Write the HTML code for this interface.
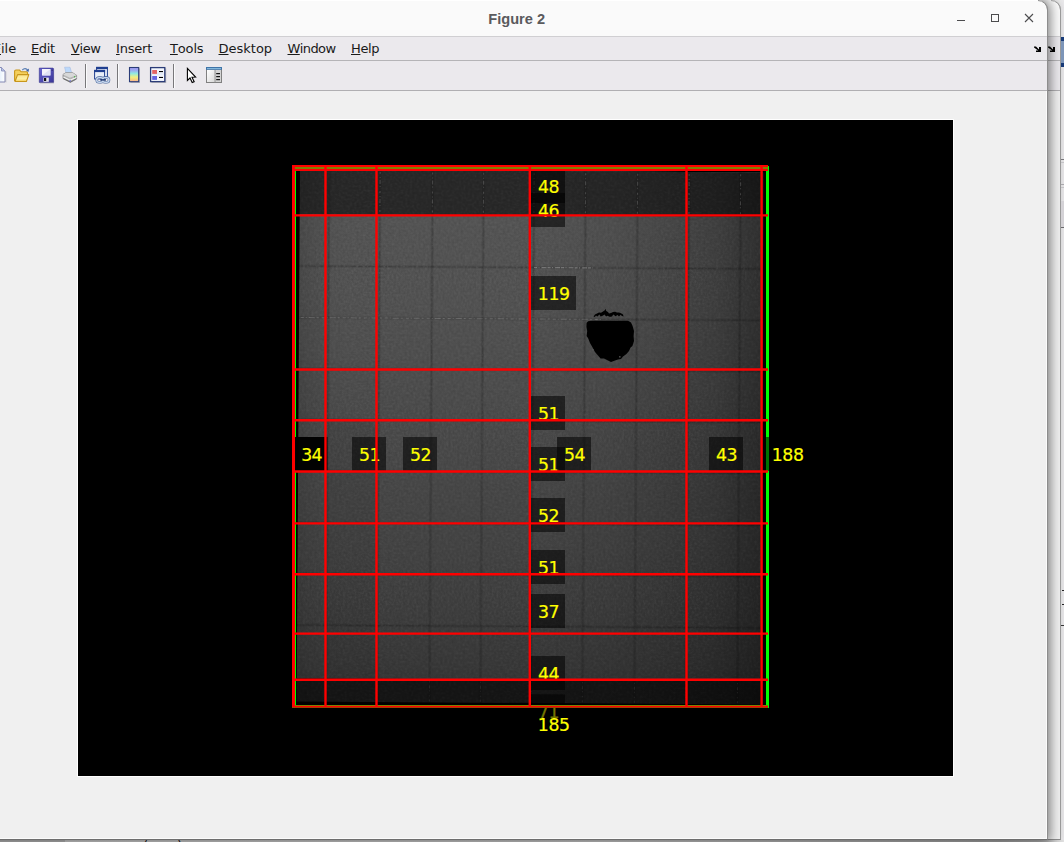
<!DOCTYPE html>
<html><head><meta charset="utf-8"><title>Figure 2</title>
<style>
html,body{margin:0;padding:0}
body{width:1064px;height:842px;overflow:hidden;position:relative;background:#e9e9e9;font-family:"DejaVu Sans","Liberation Sans",sans-serif}
.abs{position:absolute}
#bg3{left:1061px;top:0;width:3px;height:840px;background:#e9e8ea}
#under{left:0;top:840px;width:1064px;height:2px;background:linear-gradient(to right,#bdbdbd 0,#bdbdbd 65px,#d6d6d6 65px,#cfcfcf 600px,#a8a8a8 1000px,#b8b8b8 1047px,#e2e2e2 1064px)}
#under span{position:absolute;left:143px;top:-2px;font:13px "DejaVu Sans",sans-serif;color:#111;white-space:nowrap}
#win2{left:1030px;top:0;width:30px;height:839px;box-shadow:0 0 6px rgba(0,0,0,.10);border-right:1px solid #9c9c9c;border-bottom:1px solid #8c8c8c;border-top-right-radius:10px;background:#ebe9ed;overflow:hidden}
#win2 i{position:absolute;left:0;width:100%;display:block}

#win{left:-20px;top:0;width:1067px;height:839px;background:#f0f0f0;box-shadow:0 0 12px 2px rgba(0,0,0,.5);border-right:1px solid #8d8d8d;border-bottom:1px solid #6e6e6e;border-top-right-radius:10px;overflow:hidden}
#win .hl{left:0;top:91px;width:1066px;height:747px;border-right:1px solid #fbfbfb;border-bottom:1px solid #fbfbfb}
#title{left:0;top:0;width:100%;height:36px;background:#fafafa;border-bottom:1px solid #d0cfd2;box-shadow:inset 0 1px 0 #fff}
#title span{position:absolute;left:508.3px;top:11px;font:bold 14.6px "Liberation Sans",sans-serif;color:#5a5a5d;letter-spacing:0;white-space:nowrap}
#menu{left:0;top:37px;width:100%;height:23px;background:#ebe9ed;border-bottom:1px solid #b5b4b7}
#menu span{position:absolute;top:4px;font-size:13px;line-height:15px;color:#1a1a1a;white-space:nowrap;letter-spacing:-0.4px;font-kerning:none}
#menu u{text-decoration:underline;text-underline-offset:1px}
#tool{left:0;top:61px;width:100%;height:29px;background:#ebe9ed;border-bottom:1px solid #b0afb2}
#plot{left:0;top:0}
</style></head><body>
<div class="abs" id="bg3"></div>
<div class="abs" id="win2">
 <i style="top:0;height:36px;background:#fafafa"></i>
 <i style="top:36px;height:1px;background:#d0cfd2"></i>
 <i style="top:60px;height:1px;background:#b5b4b7"></i>
 <i style="top:90px;height:1px;background:#b0afb2"></i>
 <i style="top:91px;height:748px;background:#f0f0f0"></i>
</div>
<div class="abs" id="under"><span>(gray);</span></div>
<div class="abs" id="win">
 <div class="abs hl"></div>
 <div class="abs" id="title"><span>Figure 2</span></div>
 <div class="abs" id="menu">
  <span style="left:13.5px;letter-spacing:0"><u>F</u>ile</span>
  <span style="left:51px"><u>E</u>dit</span>
  <span style="left:91px"><u>V</u>iew</span>
  <span style="left:136px;letter-spacing:-0.2px"><u>I</u>nsert</span>
  <span style="left:190px;letter-spacing:-0.15px"><u>T</u>ools</span>
  <span style="left:238.5px;letter-spacing:0"><u>D</u>esktop</span>
  <span style="left:307.5px;letter-spacing:-0.6px"><u>W</u>indow</span>
  <span style="left:371px"><u>H</u>elp</span>
 </div>
 <div class="abs" id="tool"></div>
</div>
<svg class="abs" id="plot" width="1064" height="842" viewBox="0 0 1064 842">
<g id="chrome">
<rect x="957" y="20" width="8" height="1" fill="#4c4c4e"/>
<rect x="991.5" y="14.5" width="7" height="7" fill="none" stroke="#4c4c4e" stroke-width="1"/>
<path d="M1025,14 L1033,22 M1033,14 L1025,22" stroke="#4c4c4e" stroke-width="1.1" fill="none"/>
<path d="M1034,46.5 H1036 L1039,49.5 V47 H1041 V52 H1036 V50.5 H1038.2 L1034,47.5 Z" fill="#000"/>
<path d="M1048,46.5 H1050 L1053,49.5 V47 H1055 V52 H1050 V50.5 H1052.2 L1048,47.5 Z" fill="#000"/>
<path d="M1038,0.5 A9.5,9.5 0 0 1 1047.5,10" stroke="#8d8d8d" fill="none"/>
<path d="M1051,0.5 A9.5,9.5 0 0 1 1060.5,10" stroke="#9c9c9c" fill="none"/>
<rect x="1061" y="37" width="3" height="30" fill="#7d95b8"/>
<rect x="1061" y="37" width="3" height="4" fill="#173a78"/>
<rect x="1061" y="63" width="3" height="4" fill="#173a78"/>
<rect x="1061" y="159" width="3" height="1" fill="#77767a"/><rect x="1061" y="162" width="3" height="1" fill="#c4c3c6"/>
<rect x="1061" y="184" width="3" height="1" fill="#a9a8ac"/><rect x="1061" y="187" width="3" height="1" fill="#c4c3c6"/>
<rect x="1061" y="201" width="3" height="26" fill="#d4d2d6"/><rect x="1061" y="227" width="3" height="1" fill="#6a696c"/>
<rect x="1062" y="590" width="2" height="1" fill="#222"/><rect x="1062" y="604" width="2" height="1" fill="#222"/><rect x="1061" y="625" width="3" height="1" fill="#333"/>
</g>
<defs>
<linearGradient id="gcb" x1="0" y1="0" x2="0" y2="1"><stop offset="0" stop-color="#a39af2"/><stop offset="0.2" stop-color="#9aa8f0"/><stop offset="0.42" stop-color="#8fe8e2"/><stop offset="0.68" stop-color="#f0f080"/><stop offset="0.85" stop-color="#f8d080"/><stop offset="1" stop-color="#f8aa98"/></linearGradient>
<linearGradient id="gfold" x1="0" y1="0" x2="0" y2="1"><stop offset="0" stop-color="#fbe28a"/><stop offset="0.6" stop-color="#fdf0a8"/><stop offset="1" stop-color="#f6cf58"/></linearGradient>
<linearGradient id="gsave" x1="0" y1="0" x2="1" y2="1"><stop offset="0" stop-color="#6a66d0"/><stop offset="1" stop-color="#3a3698"/></linearGradient>
<linearGradient id="gdoc" x1="0" y1="0" x2="1" y2="0"><stop offset="0" stop-color="#cfe4fb"/><stop offset="1" stop-color="#ffffff"/></linearGradient>
<linearGradient id="gpan" x1="0" y1="0" x2="1" y2="1"><stop offset="0" stop-color="#ffffff"/><stop offset="1" stop-color="#d8d8d8"/></linearGradient>
</defs>
<g id="icons">
<!-- new doc -->
<path d="M-6,67.5 H1.5 L5,71 V82 H-6 Z" fill="url(#gdoc)" stroke="#8488b4" stroke-width="1"/>
<path d="M1.5,67.5 V71 H5" fill="#b8c4e8" stroke="#8488b4" stroke-width="0.8"/>
<rect x="5.5" y="71.5" width="0.8" height="11" fill="#9a9aa8" opacity="0.6"/>
<!-- open folder -->
<path d="M14.6,81 V71.2 Q14.6,70 16,70 H19.5 L21.2,71.8 H26.5 Q27.6,71.8 27.6,73 V74" fill="#f4cf5c" stroke="#c8961c" stroke-width="1.1"/>
<path d="M15,81.5 L17.6,74.6 H28.8 L26.4,81.5 Z" fill="url(#gfold)" stroke="#c8961c" stroke-width="1.1" stroke-linejoin="round"/>
<path d="M22.3,70 Q25.2,67 28,70.4" fill="none" stroke="#5c7fb4" stroke-width="1.1"/>
<path d="M28.9,68.4 L28.7,71.8 L25.9,70.9 Z" fill="#3c64a8"/>
<!-- save -->
<path d="M39.3,68.1 H53 L53.6,68.7 V82.4 H39.3 Z" fill="url(#gsave)" stroke="#34308a" stroke-width="0.6"/>
<rect x="42" y="69" width="8.4" height="6.4" fill="#f4f4fb"/>
<path d="M42,75.4 L50.4,69 V75.4 Z" fill="#dfe2f4"/>
<rect x="43.4" y="77.6" width="5.4" height="4.2" fill="#e8e8ee"/>
<rect x="44" y="78" width="2.2" height="3" fill="#111"/>
<rect x="51.6" y="69.4" width="1" height="1.6" fill="#2a2670"/>
<rect x="40" y="82.6" width="14" height="0.8" fill="#8a8a98" opacity="0.6"/>
<!-- printer -->
<path d="M64.6,67.2 H70 L71.8,73.2 H66 Z" fill="#bcd8fa" stroke="#9ab4dc" stroke-width="0.5"/>
<path d="M63,74.4 L66,72.6 H72.4 L76.6,75.2 V79 L70.4,82.4 L63,78.6 Z" fill="#b4b4b4" stroke="#7c7c7c" stroke-width="0.7"/>
<path d="M63,74.6 L69.8,77.8 L76.6,75.2 L72.4,72.8 H66 Z" fill="#d8d8d8"/>
<path d="M63.4,77 L70.2,80.2 L76.4,77.4" fill="none" stroke="#f4f4f4" stroke-width="1.2"/>
<path d="M63.4,78.6 L70.3,82 L76.4,78.8" fill="none" stroke="#686868" stroke-width="0.9"/>
<rect x="74" y="76.2" width="1.2" height="1.2" fill="#3cb43c"/>
<rect x="69.4" y="80.4" width="1.6" height="1" fill="#5a5ad0"/>
<!-- sep1 -->
<rect x="85" y="64" width="1" height="24" fill="#78777a"/><rect x="86" y="64" width="1" height="24" fill="#fbfbfc"/>
<!-- link windows -->
<rect x="96.6" y="67.4" width="10.8" height="9.6" fill="#eef2fa" stroke="#203f90" stroke-width="1"/>
<rect x="96.1" y="66.9" width="11.8" height="2.2" fill="#203f90"/>
<rect x="94.6" y="70.4" width="10" height="8.6" fill="#e8eef8" stroke="#203f90" stroke-width="1"/>
<rect x="94.1" y="69.9" width="11" height="2.2" fill="#203f90"/>
<g fill="none">
<rect x="96.7" y="77.6" width="6.4" height="4.6" rx="2.3" stroke="#4a679c" stroke-width="2.5"/>
<rect x="102.6" y="77.6" width="6.4" height="4.6" rx="2.3" stroke="#4a679c" stroke-width="2.5"/>
<rect x="96.7" y="77.6" width="6.4" height="4.6" rx="2.3" stroke="#c9d8ee" stroke-width="1.4"/>
<rect x="102.6" y="77.6" width="6.4" height="4.6" rx="2.3" stroke="#c9d8ee" stroke-width="1.4"/>
</g>
<rect x="100.2" y="79.2" width="5.8" height="1.4" fill="#16306c"/>
<!-- sep2 -->
<rect x="117" y="64" width="1" height="24" fill="#78777a"/><rect x="118" y="64" width="1" height="24" fill="#fbfbfc"/>
<!-- colorbar -->
<rect x="130.4" y="68.4" width="9.6" height="14.6" fill="#8c8c94" opacity="0.55"/>
<rect x="129.5" y="67.5" width="9.2" height="14.2" fill="url(#gcb)" stroke="#2b3c78" stroke-width="1.1"/>
<!-- legend -->
<rect x="151.4" y="68.4" width="14.8" height="14.6" fill="#8c8c94" opacity="0.55"/>
<rect x="150.6" y="67.6" width="14.2" height="14" fill="#f4f7fd" stroke="#2b3c78" stroke-width="1.3"/>
<rect x="152" y="72.6" width="11.6" height="2.6" fill="#e4ebf8"/>
<rect x="152.2" y="70" width="4.8" height="3.9" fill="#e26464"/>
<rect x="152.2" y="76" width="4.8" height="3.9" fill="#6464e2"/>
<rect x="159" y="71" width="4" height="1.1" fill="#000"/>
<rect x="159" y="76.9" width="4" height="1.1" fill="#000"/>
<!-- sep3 -->
<rect x="173" y="64" width="1" height="24" fill="#78777a"/><rect x="174" y="64" width="1" height="24" fill="#fbfbfc"/>
<!-- cursor -->
<path d="M187.4,68.4 V80.4 L190,78 L192.2,82.6 L194.2,81.7 L192,77.2 L195.6,77 Z" fill="#fff" stroke="#000" stroke-width="1.1" stroke-linejoin="miter"/>
<!-- panel -->
<rect x="206.5" y="67.5" width="15" height="15" fill="#d4d4d4" stroke="#808080" stroke-width="1"/>
<rect x="207" y="70" width="7.6" height="12" fill="url(#gpan)"/>
<rect x="214.6" y="70" width="0.9" height="12.4" fill="#909090"/>
<rect x="206" y="67" width="16" height="2.8" fill="#3f74a8"/>
<rect x="207" y="68" width="14" height="0.9" fill="#8cc0e4"/>
<rect x="216.2" y="73.1" width="3.8" height="1.1" fill="#000"/>
<rect x="216.2" y="76.1" width="3.8" height="1.1" fill="#000"/>
<rect x="216.2" y="79.1" width="3.8" height="1.1" fill="#000"/>
</g>

<defs>
<linearGradient id="gv" x1="0" y1="0" x2="0" y2="1"><stop offset="0.086" stop-color="#545454"/><stop offset="0.242" stop-color="#525252"/><stop offset="0.430" stop-color="#4c4c4c"/><stop offset="0.712" stop-color="#434343"/><stop offset="0.806" stop-color="#3f3f3f"/><stop offset="0.910" stop-color="#393939"/><stop offset="0.957" stop-color="#363636"/><stop offset="1.000" stop-color="#343434"/></linearGradient>
<linearGradient id="gh" x1="0" y1="0" x2="1" y2="0"><stop offset="0.000" stop-color="#000" stop-opacity="0.14"/><stop offset="0.028" stop-color="#000" stop-opacity="0.08"/><stop offset="0.071" stop-color="#000" stop-opacity="0.02"/><stop offset="0.113" stop-color="#000" stop-opacity="0"/><stop offset="0.498" stop-color="#000" stop-opacity="0"/><stop offset="0.562" stop-color="#000" stop-opacity="0.03"/><stop offset="0.669" stop-color="#000" stop-opacity="0.07"/><stop offset="0.776" stop-color="#000" stop-opacity="0.145"/><stop offset="0.893" stop-color="#000" stop-opacity="0.245"/><stop offset="0.968" stop-color="#000" stop-opacity="0.39"/><stop offset="1.000" stop-color="#000" stop-opacity="0.45"/></linearGradient>
<filter id="nz" x="0" y="0" width="100%" height="100%" color-interpolation-filters="sRGB"><feTurbulence type="fractalNoise" baseFrequency="0.45" numOctaves="2" seed="3" result="n"/><feColorMatrix in="n" type="matrix" values="1 0 0 0 0  1 0 0 0 0  1 0 0 0 0  0 0 0 0 1"/></filter>
<clipPath id="cimg"><rect x="298.3" y="168" width="463.6" height="535"/></clipPath>
</defs>
<rect x="77" y="119" width="877" height="658" fill="#fff"/>
<rect x="78" y="120" width="875" height="656" fill="#000"/>
<g transform="rotate(0.36 530 437)"><g clip-path="url(#cimg)">
<rect x="297" y="171" width="468" height="532" fill="url(#gv)"/>
<rect x="297" y="171" width="468" height="44.4" fill="#282828"/>
<rect x="297" y="679.5" width="468" height="25" fill="#151515"/>
<rect x="297" y="171" width="468" height="532" fill="url(#gh)"/>
<line x1="327.5" y1="171" x2="327.5" y2="703" stroke="#000" stroke-opacity="0.09" stroke-width="3"/>
<line x1="327.5" y1="215" x2="327.5" y2="421" stroke="#000" stroke-opacity="0.12" stroke-width="1" stroke-dasharray="7 1 3 2 9 1.5"/>
<line x1="327.5" y1="421" x2="327.5" y2="680" stroke="#000" stroke-opacity="0.06" stroke-width="1" stroke-dasharray="7 1 3 2 9 1.5"/>
<line x1="378.5" y1="171" x2="378.5" y2="703" stroke="#000" stroke-opacity="0.09" stroke-width="3"/>
<line x1="378.5" y1="215" x2="378.5" y2="421" stroke="#000" stroke-opacity="0.12" stroke-width="1" stroke-dasharray="7 1 3 2 9 1.5"/>
<line x1="378.5" y1="421" x2="378.5" y2="680" stroke="#000" stroke-opacity="0.06" stroke-width="1" stroke-dasharray="7 1 3 2 9 1.5"/>
<line x1="431" y1="171" x2="431" y2="703" stroke="#000" stroke-opacity="0.09" stroke-width="3"/>
<line x1="431" y1="215" x2="431" y2="421" stroke="#000" stroke-opacity="0.12" stroke-width="1" stroke-dasharray="7 1 3 2 9 1.5"/>
<line x1="431" y1="421" x2="431" y2="680" stroke="#000" stroke-opacity="0.06" stroke-width="1" stroke-dasharray="7 1 3 2 9 1.5"/>
<line x1="482" y1="171" x2="482" y2="703" stroke="#000" stroke-opacity="0.09" stroke-width="3"/>
<line x1="482" y1="215" x2="482" y2="421" stroke="#000" stroke-opacity="0.12" stroke-width="1" stroke-dasharray="7 1 3 2 9 1.5"/>
<line x1="482" y1="421" x2="482" y2="680" stroke="#000" stroke-opacity="0.06" stroke-width="1" stroke-dasharray="7 1 3 2 9 1.5"/>
<line x1="532.5" y1="171" x2="532.5" y2="703" stroke="#000" stroke-opacity="0.09" stroke-width="3"/>
<line x1="532.5" y1="215" x2="532.5" y2="421" stroke="#000" stroke-opacity="0.12" stroke-width="1" stroke-dasharray="7 1 3 2 9 1.5"/>
<line x1="532.5" y1="421" x2="532.5" y2="680" stroke="#000" stroke-opacity="0.06" stroke-width="1" stroke-dasharray="7 1 3 2 9 1.5"/>
<line x1="584" y1="171" x2="584" y2="703" stroke="#000" stroke-opacity="0.09" stroke-width="3"/>
<line x1="584" y1="215" x2="584" y2="421" stroke="#000" stroke-opacity="0.12" stroke-width="1" stroke-dasharray="7 1 3 2 9 1.5"/>
<line x1="584" y1="421" x2="584" y2="680" stroke="#000" stroke-opacity="0.06" stroke-width="1" stroke-dasharray="7 1 3 2 9 1.5"/>
<line x1="636" y1="171" x2="636" y2="703" stroke="#000" stroke-opacity="0.09" stroke-width="3"/>
<line x1="636" y1="215" x2="636" y2="421" stroke="#000" stroke-opacity="0.12" stroke-width="1" stroke-dasharray="7 1 3 2 9 1.5"/>
<line x1="636" y1="421" x2="636" y2="680" stroke="#000" stroke-opacity="0.06" stroke-width="1" stroke-dasharray="7 1 3 2 9 1.5"/>
<line x1="687.5" y1="171" x2="687.5" y2="703" stroke="#000" stroke-opacity="0.09" stroke-width="3"/>
<line x1="687.5" y1="215" x2="687.5" y2="421" stroke="#000" stroke-opacity="0.12" stroke-width="1" stroke-dasharray="7 1 3 2 9 1.5"/>
<line x1="687.5" y1="421" x2="687.5" y2="680" stroke="#000" stroke-opacity="0.06" stroke-width="1" stroke-dasharray="7 1 3 2 9 1.5"/>
<line x1="739" y1="171" x2="739" y2="703" stroke="#000" stroke-opacity="0.09" stroke-width="3"/>
<line x1="739" y1="215" x2="739" y2="421" stroke="#000" stroke-opacity="0.12" stroke-width="1" stroke-dasharray="7 1 3 2 9 1.5"/>
<line x1="739" y1="421" x2="739" y2="680" stroke="#000" stroke-opacity="0.06" stroke-width="1" stroke-dasharray="7 1 3 2 9 1.5"/>
<line x1="297" y1="267.5" x2="766" y2="267.5" stroke="#000" stroke-opacity="0.08" stroke-width="3"/>
<line x1="297" y1="267.5" x2="766" y2="267.5" stroke="#000" stroke-opacity="0.13" stroke-width="1" stroke-dasharray="5 2 2 1 8 2"/>
<line x1="297" y1="319" x2="766" y2="319" stroke="#000" stroke-opacity="0.08" stroke-width="3"/>
<line x1="300" y1="319" x2="600" y2="319" stroke="#b0b0b0" stroke-opacity="0.3" stroke-width="1" stroke-dasharray="3 2 1 2 6 2 2 3"/>
<line x1="600" y1="319" x2="766" y2="319" stroke="#000" stroke-opacity="0.12" stroke-width="1" stroke-dasharray="5 2 2 1 8 2"/>
<line x1="297" y1="370" x2="766" y2="370" stroke="#000" stroke-opacity="0.08" stroke-width="3"/>
<line x1="297" y1="370" x2="766" y2="370" stroke="#000" stroke-opacity="0.13" stroke-width="1" stroke-dasharray="5 2 2 1 8 2"/>
<line x1="297" y1="421" x2="766" y2="421" stroke="#000" stroke-opacity="0.08" stroke-width="3"/>
<line x1="297" y1="421" x2="766" y2="421" stroke="#000" stroke-opacity="0.13" stroke-width="1" stroke-dasharray="5 2 2 1 8 2"/>
<line x1="297" y1="472" x2="766" y2="472" stroke="#000" stroke-opacity="0.08" stroke-width="3"/>
<line x1="297" y1="472" x2="766" y2="472" stroke="#000" stroke-opacity="0.13" stroke-width="1" stroke-dasharray="5 2 2 1 8 2"/>
<line x1="297" y1="524" x2="766" y2="524" stroke="#000" stroke-opacity="0.08" stroke-width="3"/>
<line x1="297" y1="524" x2="766" y2="524" stroke="#000" stroke-opacity="0.13" stroke-width="1" stroke-dasharray="5 2 2 1 8 2"/>
<line x1="297" y1="575" x2="766" y2="575" stroke="#000" stroke-opacity="0.08" stroke-width="3"/>
<line x1="297" y1="575" x2="766" y2="575" stroke="#000" stroke-opacity="0.13" stroke-width="1" stroke-dasharray="5 2 2 1 8 2"/>
<line x1="297" y1="626.5" x2="766" y2="626.5" stroke="#000" stroke-opacity="0.08" stroke-width="3"/>
<line x1="297" y1="626.5" x2="766" y2="626.5" stroke="#000" stroke-opacity="0.13" stroke-width="1" stroke-dasharray="5 2 2 1 8 2"/>
<line x1="378.5" y1="173" x2="378.5" y2="214" stroke="#999" stroke-opacity="0.3" stroke-width="1.1" stroke-dasharray="2 3 1 2 4 2 1 4"/>
<line x1="378.5" y1="682" x2="378.5" y2="702" stroke="#999" stroke-opacity="0.15" stroke-width="1.1" stroke-dasharray="1 3 3 2 1 4"/>
<line x1="431" y1="173" x2="431" y2="214" stroke="#999" stroke-opacity="0.3" stroke-width="1.1" stroke-dasharray="2 3 1 2 4 2 1 4"/>
<line x1="431" y1="682" x2="431" y2="702" stroke="#999" stroke-opacity="0.15" stroke-width="1.1" stroke-dasharray="1 3 3 2 1 4"/>
<line x1="482" y1="173" x2="482" y2="214" stroke="#999" stroke-opacity="0.3" stroke-width="1.1" stroke-dasharray="2 3 1 2 4 2 1 4"/>
<line x1="482" y1="682" x2="482" y2="702" stroke="#999" stroke-opacity="0.15" stroke-width="1.1" stroke-dasharray="1 3 3 2 1 4"/>
<line x1="532.5" y1="173" x2="532.5" y2="214" stroke="#999" stroke-opacity="0.3" stroke-width="1.1" stroke-dasharray="2 3 1 2 4 2 1 4"/>
<line x1="532.5" y1="682" x2="532.5" y2="702" stroke="#999" stroke-opacity="0.15" stroke-width="1.1" stroke-dasharray="1 3 3 2 1 4"/>
<line x1="584" y1="173" x2="584" y2="214" stroke="#999" stroke-opacity="0.3" stroke-width="1.1" stroke-dasharray="2 3 1 2 4 2 1 4"/>
<line x1="584" y1="682" x2="584" y2="702" stroke="#999" stroke-opacity="0.15" stroke-width="1.1" stroke-dasharray="1 3 3 2 1 4"/>
<line x1="636" y1="173" x2="636" y2="214" stroke="#999" stroke-opacity="0.3" stroke-width="1.1" stroke-dasharray="2 3 1 2 4 2 1 4"/>
<line x1="636" y1="682" x2="636" y2="702" stroke="#999" stroke-opacity="0.15" stroke-width="1.1" stroke-dasharray="1 3 3 2 1 4"/>
<line x1="687.5" y1="173" x2="687.5" y2="214" stroke="#999" stroke-opacity="0.3" stroke-width="1.1" stroke-dasharray="2 3 1 2 4 2 1 4"/>
<line x1="687.5" y1="682" x2="687.5" y2="702" stroke="#999" stroke-opacity="0.15" stroke-width="1.1" stroke-dasharray="1 3 3 2 1 4"/>
<line x1="739" y1="173" x2="739" y2="214" stroke="#999" stroke-opacity="0.3" stroke-width="1.1" stroke-dasharray="2 3 1 2 4 2 1 4"/>
<line x1="739" y1="682" x2="739" y2="702" stroke="#999" stroke-opacity="0.15" stroke-width="1.1" stroke-dasharray="1 3 3 2 1 4"/>
<rect x="328" y="421" width="50" height="259" fill="#000" fill-opacity="0.06"/>
<line x1="533" y1="267.5" x2="592" y2="267.5" stroke="#aaa" stroke-opacity="0.5" stroke-width="1.2" stroke-dasharray="3 1.5 1 2 5 1"/>
<rect x="297" y="171" width="468" height="532" filter="url(#nz)" opacity="0.2" style="mix-blend-mode:soft-light"/>
</g></g>
<path d="M586.6,323 L588,321.2 L592,320.8 L628,320.8 L631,322.5 L632.6,326 L634,331 L633.6,336 L634,341 L632.4,346 L630.6,347.5 L629,351 L626.4,354 L623,356.4 L621,359 L618,359.4 L615,360.6 L611,362 L608,360.4 L604,358.6 L600.6,358.4 L598,355.4 L595,352 L592.6,347.6 L590,343 L588,338 L586.6,336 L587.2,331 L586.4,327 Z" fill="#000"/>
<path d="M593.6,316.6 L595,314.4 L597,313.4 L599,312.4 L601,312.8 L603,311.6 L604.6,310.4 L605.4,308.8 L606.2,311 L608,312 L609,313.6 L611,313 L613,312 L615,311.8 L617,312.6 L619,312.4 L621,313.2 L623,314.6 L623.6,316.4 L622,316 L620.6,314.8 L619,316.6 L617.6,315 L615.4,316.2 L613.6,314.6 L611.4,316.8 L609.6,316.8 L607.6,315.8 L606,316.6 L604.6,314.4 L602.6,315.8 L600.6,316.4 L599.4,314.6 L597.4,316.4 L596,315.4 L594.6,317 Z" fill="#000"/>
<rect x="592" y="349" width="1.6" height="1.6" fill="#555"/><rect x="619" y="356" width="1.6" height="1.6" fill="#444"/>
<rect x="295" y="169" width="1" height="537" fill="#00ff00"/>
<rect x="766" y="166" width="3" height="542" fill="#00ff00"/>
<g font-family="DejaVu Sans, Liberation Sans, sans-serif" font-size="17.33">
<rect x="531" y="169" width="34" height="34" fill="#000" fill-opacity="0.55"/>
<text x="538.0" y="192.5" fill="#ffff00" stroke="#ffff00" stroke-width="0.2" letter-spacing="-0.6">48</text>
<rect x="531" y="193" width="34" height="34" fill="#000" fill-opacity="0.55"/>
<text x="538.0" y="216.5" fill="#ffff00" stroke="#ffff00" stroke-width="0.2" letter-spacing="-0.6">46</text>
<rect x="531" y="276" width="45" height="34" fill="#000" fill-opacity="0.55"/>
<text x="537.75" y="299.5" fill="#ffff00" stroke="#ffff00" stroke-width="0.2" letter-spacing="-0.38">119</text>
<rect x="531" y="396" width="34" height="34" fill="#000" fill-opacity="0.55"/>
<text x="538.0" y="419.5" fill="#ffff00" stroke="#ffff00" stroke-width="0.2" letter-spacing="-0.6">51</text>
<rect x="531" y="447" width="34" height="34" fill="#000" fill-opacity="0.55"/>
<text x="538.0" y="470.5" fill="#ffff00" stroke="#ffff00" stroke-width="0.2" letter-spacing="-0.6">51</text>
<rect x="531" y="498" width="34" height="34" fill="#000" fill-opacity="0.55"/>
<text x="538.0" y="521.5" fill="#ffff00" stroke="#ffff00" stroke-width="0.2" letter-spacing="-0.6">52</text>
<rect x="531" y="550" width="34" height="34" fill="#000" fill-opacity="0.55"/>
<text x="538.0" y="573.5" fill="#ffff00" stroke="#ffff00" stroke-width="0.2" letter-spacing="-0.6">51</text>
<rect x="531" y="594" width="34" height="34" fill="#000" fill-opacity="0.55"/>
<text x="538.0" y="617.5" fill="#ffff00" stroke="#ffff00" stroke-width="0.2" letter-spacing="-0.6">37</text>
<rect x="531" y="656" width="34" height="34" fill="#000" fill-opacity="0.55"/>
<text x="538.0" y="679.5" fill="#ffff00" stroke="#ffff00" stroke-width="0.2" letter-spacing="-0.6">44</text>
<rect x="531" y="694.3" width="34" height="34" fill="#000" fill-opacity="0.55"/>
<text x="538.0" y="717.8" fill="#ffff00" stroke="#ffff00" stroke-width="0.2" letter-spacing="-0.6">71</text>
<rect x="531" y="707.2" width="45" height="34" fill="#000" fill-opacity="0.55"/>
<text x="537.75" y="730.7" fill="#ffff00" stroke="#ffff00" stroke-width="0.2" letter-spacing="-0.38">185</text>
<rect x="294.2" y="437" width="33.3" height="34" fill="#000" fill-opacity="0.97"/>
<text x="301.2" y="460.5" fill="#ffff00" stroke="#ffff00" stroke-width="0.2" letter-spacing="-0.6">34</text>
<rect x="352" y="437" width="34" height="34" fill="#000" fill-opacity="0.55"/>
<text x="359.0" y="460.5" fill="#ffff00" stroke="#ffff00" stroke-width="0.2" letter-spacing="-0.6">51</text>
<rect x="403" y="437" width="34" height="34" fill="#000" fill-opacity="0.55"/>
<text x="410.0" y="460.5" fill="#ffff00" stroke="#ffff00" stroke-width="0.2" letter-spacing="-0.6">52</text>
<rect x="557" y="437" width="34" height="34" fill="#000" fill-opacity="0.55"/>
<text x="564.0" y="460.5" fill="#ffff00" stroke="#ffff00" stroke-width="0.2" letter-spacing="-0.6">54</text>
<rect x="709" y="437" width="34" height="34" fill="#000" fill-opacity="0.55"/>
<text x="716.0" y="460.5" fill="#ffff00" stroke="#ffff00" stroke-width="0.2" letter-spacing="-0.6">43</text>
<rect x="764.9" y="437" width="45" height="34" fill="#000" fill-opacity="0.55"/>
<text x="771.65" y="460.5" fill="#ffff00" stroke="#ffff00" stroke-width="0.2" letter-spacing="-0.38">188</text>
</g>
<rect x="292" y="165" width="476" height="6" fill="#ff0000"/>
<rect x="295" y="167" width="473" height="2" fill="#808000"/>
<rect x="292" y="705" width="476" height="1" fill="#808000"/>
<rect x="292" y="706" width="476" height="1" fill="#ff0000"/>
<rect x="292" y="707" width="476" height="1" fill="#a04000"/>
<rect x="292" y="165" width="3" height="542" fill="#ff0000"/>
<line x1="325.5" y1="166" x2="325.5" y2="706" stroke="#ff0000" stroke-width="2.4"/>
<line x1="376.5" y1="166" x2="376.5" y2="706" stroke="#ff0000" stroke-width="2.4"/>
<line x1="529.8" y1="166" x2="529.8" y2="706" stroke="#ff0000" stroke-width="2.4"/>
<line x1="686.5" y1="166" x2="686.5" y2="706" stroke="#ff0000" stroke-width="2.4"/>
<line x1="761.6" y1="166" x2="761.6" y2="706" stroke="#ff0000" stroke-width="2.4"/>
<line x1="292" y1="215.4" x2="768" y2="215.4" stroke="#ff0000" stroke-width="2.4"/>
<line x1="292" y1="369.5" x2="768" y2="369.5" stroke="#ff0000" stroke-width="2.4"/>
<line x1="292" y1="420.3" x2="768" y2="420.3" stroke="#ff0000" stroke-width="2.4"/>
<line x1="292" y1="471.5" x2="768" y2="471.5" stroke="#ff0000" stroke-width="2.4"/>
<line x1="292" y1="523.4" x2="768" y2="523.4" stroke="#ff0000" stroke-width="2.4"/>
<line x1="292" y1="574.3" x2="768" y2="574.3" stroke="#ff0000" stroke-width="2.4"/>
<line x1="292" y1="633.6" x2="768" y2="633.6" stroke="#ff0000" stroke-width="2.4"/>
<line x1="292" y1="679.7" x2="768" y2="679.7" stroke="#ff0000" stroke-width="2.4"/>
<g font-family="DejaVu Sans, Liberation Sans, sans-serif" font-size="17.33">
</g>
</svg>
</body></html>
